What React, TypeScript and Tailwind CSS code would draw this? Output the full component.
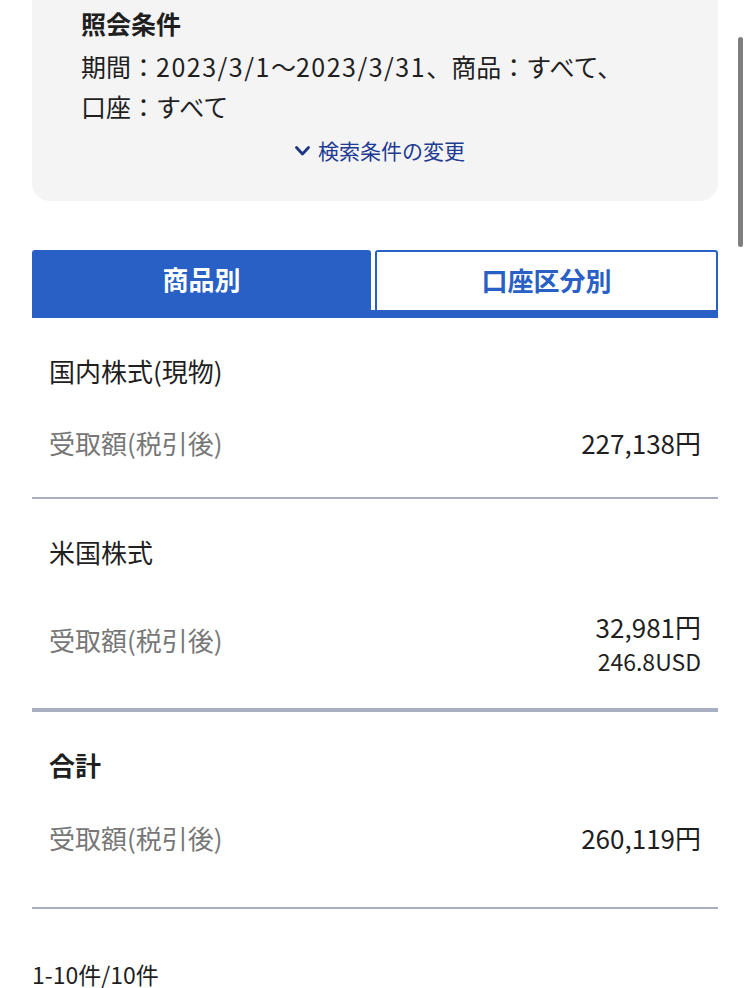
import React from "react";

const font = { fontFamily: '"Noto Sans CJK JP", "Noto Sans", sans-serif' };

export default function App() {
  return (
    <div
      className="relative w-[750px] min-h-[988px] bg-white text-[#1f1f1f]"
      style={font}
    >
      {/* scrollbar */}
      <div className="absolute left-[738px] top-[37px] w-[5px] h-[210px] rounded-full bg-[#7f7f7f]" />

      {/* conditions card */}
      <div className="mx-[32px] w-[686px] rounded-b-[18px] bg-[#f4f4f4] pl-[49px] pr-[20px] pt-[6px] pb-[36px]">
        <div className="text-[25px] leading-[34px] font-bold text-[#1f1f1f]">照会条件</div>
        <div className="mt-[6px] text-[25px] leading-[40px] text-[#1f1f1f] whitespace-nowrap">
          期間：<span className="tracking-[1.5px]">2023/3/1</span>〜<span className="tracking-[1.5px]">2023/3/31</span>、商品：すべて、
          <br />
          口座：すべて
        </div>
        <div className="mt-[9px] flex items-center justify-center gap-[8px] pr-[19px] text-[21px] leading-[30px] text-[#213a92]">
          <svg width="15" height="10" viewBox="0 0 15 10" className="mt-[1px]">
            <path d="M1.5 1.5 L7.5 8 L13.5 1.5" fill="none" stroke="#1c3585" strokeWidth="2.8" strokeLinecap="round" strokeLinejoin="round" />
          </svg>
          <span>検索条件の変更</span>
        </div>
      </div>

      {/* tabs */}
      <div className="mx-[32px] mt-[49px] w-[686px]">
        <div className="flex gap-[4px] h-[60px]">
          <div className="flex-1 rounded-t-[3px] bg-[#2860c5] flex items-center justify-center text-white text-[26px] font-bold pb-[4px]">
            商品別
          </div>
          <div className="flex-1 rounded-t-[3px] border-2 border-b-0 border-[#2860c5] bg-white flex items-center justify-center text-[#2860c5] text-[26px] font-bold pb-[4px]">
            口座区分別
          </div>
        </div>
        <div className="h-[8px] bg-[#2860c5]" />
      </div>

      {/* list */}
      <div className="mx-[32px] w-[686px]">
        {/* section 1 */}
        <div className="px-[17px] pt-[38px] pb-[39px]">
          <div className="text-[26px] leading-[30px] text-[#1f1f1f]">国内株式(現物)</div>
          <div className="mt-[42px] flex items-center justify-between">
            <span className="text-[26px] leading-[30px] text-[#777777]">受取額(税引後)</span>
            <span className="text-[26px] leading-[30px] text-[#1f1f1f]">227,138円</span>
          </div>
        </div>
        <div className="h-[2px] bg-[#a8afc2]" />

        {/* section 2 */}
        <div className="px-[17px] pt-[38px] pb-[30px]">
          <div className="text-[26px] leading-[30px] text-[#1f1f1f]">米国株式</div>
          <div className="mt-[43px] flex items-center justify-between">
            <span className="text-[26px] leading-[30px] text-[#777777] -mt-[8px]">受取額(税引後)</span>
            <div className="flex flex-col items-end">
              <span className="text-[26px] leading-[34px] text-[#1f1f1f]">32,981円</span>
              <span className="text-[23px] leading-[34px] text-[#1f1f1f]">246.8USD</span>
            </div>
          </div>
        </div>
        <div className="h-[4px] bg-[#a8afc2]" />

        {/* section 3 */}
        <div className="px-[17px] pt-[38px] pb-[54px]">
          <div className="text-[26px] leading-[30px] font-bold text-[#1f1f1f]">合計</div>
          <div className="mt-[43px] flex items-center justify-between">
            <span className="text-[26px] leading-[30px] text-[#777777]">受取額(税引後)</span>
            <span className="text-[26px] leading-[30px] text-[#1f1f1f]">260,119円</span>
          </div>
        </div>
        <div className="h-[2px] bg-[#a8afc2]" />
      </div>

      <div className="ml-[32px] mt-[52px] pb-[16px] text-[23px] leading-[26px] text-[#1f1f1f]">1-10件/10件</div>
    </div>
  );
}
